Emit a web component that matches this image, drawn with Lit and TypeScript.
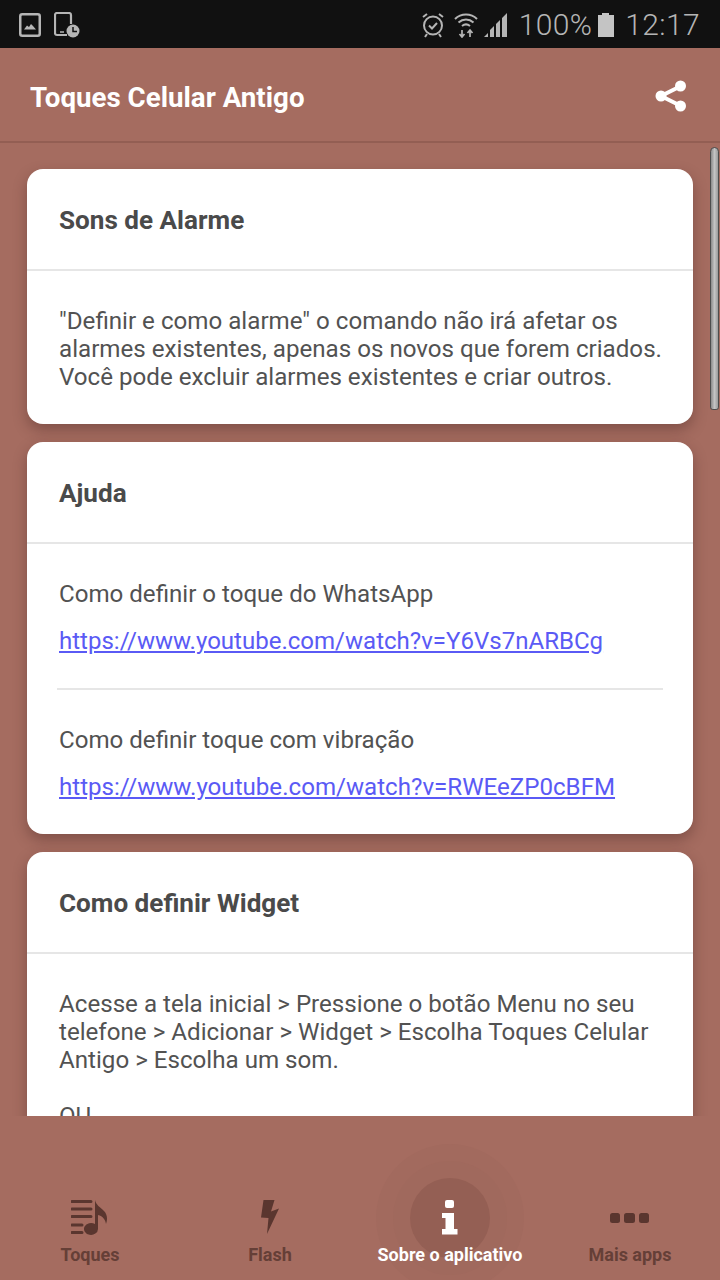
import { LitElement, html, css } from "lit";
import { customElement } from "lit/decorators.js";

@customElement("app-root")
export class AppRoot extends LitElement {
  static styles = css`
    :host { display: flex; flex-direction: column; width: 720px; height: 1280px; overflow: hidden; position: relative;
      background: #a56c60; font-family: Roboto, "Liberation Sans", sans-serif; color: #525252; }
    .status { height: 48px; flex: none; background: #111; display: flex; align-items: center; justify-content: space-between; padding: 2px 20px 0 19px; box-sizing: border-box; color: #b5b5b5; }
    .st-left, .st-right { display: flex; align-items: center; }
    .st-left { gap: 13px; }
    .st-right { font-size: 30px; font-weight: 300; line-height: 46px; }
    .header { height: 95px; flex: none; display: flex; align-items: center; justify-content: space-between; box-sizing: border-box; padding: 2px 33px 0 30px; border-bottom: 2px solid #935e53; }
    .title { color: #fff; font-size: 27.7px; font-weight: 700; margin-top: 4px; }
    .content { height: 973px; flex: none; overflow: hidden; padding: 26px 27px 0; box-sizing: border-box; display: flex; flex-direction: column; gap: 18px; }
    .card { flex: none; background: #fff; border-radius: 16px; box-shadow: 0 6px 14px rgba(60,30,25,.35); }
    .card h2 { margin: 0; display: flex; align-items: center; padding: 2px 32px 0; font-size: 26.1px; font-weight: 700; color: #4a4a4a; border-bottom: 2px solid #e6e6e6; box-sizing: content-box; height: 98px; }
    .body { padding: 36px 24px 33px 32px; font-size: 24.15px; line-height: 28px; }
    .body p { margin: 0; }
    .body .gap { margin-top: 28px; }
    .help { padding: 36px 32px 0; font-size: 24.1px; line-height: 28px; }
    .help p { margin: 0 0 19px; }
    .help a { color: #5a5af5; text-decoration: underline; display: block; font-size: 24.04px; }
    .help hr { margin: 33px -2px 36px; border: 0; border-top: 2px solid #e6e6e6; }
    .help .end { padding-bottom: 33px; font-size: 24.12px; }
    .nav { flex: 1; display: grid; grid-template-columns: repeat(4, 180px); position: relative; z-index: 1; background: #a56c60; }
    .tab { display: flex; flex-direction: column; align-items: center; justify-content: flex-end; padding-bottom: 14px; position: relative; color: #653f37; font-size: 18px; font-weight: 700; line-height: 22px; }
    .tab svg { display: block; margin-bottom: 8px; position: relative; }
    .tab.active { color: #fff; }
    .tab span { position: relative; white-space: nowrap; }
    .ring { position: absolute; left: 50%; top: 102px; border-radius: 50%; transform: translate(-50%, -50%); }
    .r1 { width: 148px; height: 148px; background: #a26a5e; }
    .r2 { width: 114px; height: 114px; background: #a0695d; }
    .r3 { width: 80px; height: 80px; background: #945f54; }
    .scroll { position: absolute; left: 710px; top: 147px; width: 9px; height: 263px; border-radius: 5px 5px 3px 3px; box-sizing: border-box; border: 1px solid #4d4d4d; background: linear-gradient(90deg, #8a8a8a, #c4c4c4 50%, #9a9a9a); }
  `;

  render() {
    return html`
      <div class="status">
        <div class="st-left">
          <svg width="22" height="24" viewBox="0 0 22 24" fill="none"><rect x="1.25" y="1.25" width="19.5" height="21.5" rx="2" stroke="#b5b5b5" stroke-width="2.500"/><path d="M5 16.500l3-4 2 1.500 2-3 2 2 3 3.500z" fill="#b5b5b5"/></svg>
          <svg width="26" height="26" viewBox="0 0 26 26" fill="none"><path d="M13 23H3a2 2 0 0 1-2-2V3a2 2 0 0 1 2-2h12a2 2 0 0 1 2 2v9" stroke="#b5b5b5" stroke-width="2.200"/><path d="M6 20h4" stroke="#b5b5b5" stroke-width="1.500"/><circle cx="19" cy="19" r="6.500" fill="#b5b5b5"/><path d="M19 15v4.500h4" stroke="#111" stroke-width="1.500"/></svg>
        </div>
        <div class="st-right">
          <svg width="24" height="26" viewBox="0 0 24 26" fill="none" stroke="#b5b5b5" stroke-width="2" style="margin-right:9px"><circle cx="12" cy="13.500" r="9"/><path d="M8 13.500l3 3 5-5.500M2 5l4-3M22 5l-4-3M6 22l-2 3M18 22l2 3"/></svg>
          <svg width="24" height="26" viewBox="0 0 24 26" fill="none" stroke="#b5b5b5" stroke-width="2" style="margin-right:6px"><path d="M1 7c6-6 16-6 22 0M4.500 10.500c4.500-4 10.500-4 15 0M8 14c2.500-2 5.500-2 8 0"/><path d="M12 16.500h.01" stroke-width="3"/><path d="M8 18v7M5.500 22l2.500 3 2.500-3M16 25v-7M13.500 21l2.500-3 2.500 3" stroke-width="1.700"/></svg>
          <svg width="24" height="24" viewBox="0 0 24 24" fill="#b5b5b5" style="margin-right:11px"><path d="M0 24l4-4v4zM6 24v-7l4-4v11zM12 24V11l4-4v17zM18 24V5l5-5v24z"/></svg>
          <span style="letter-spacing:.3px">100%</span>
          <svg width="16" height="24" viewBox="0 0 16 24" style="margin:0 11px 0 6px" fill="#c4c4c4"><path d="M4 2V0h7v2h5v22H0V2z"/></svg>
          <span style="letter-spacing:.4px">12:17</span>
        </div>
      </div>
      <div class="header">
        <div class="title">Toques Celular Antigo</div>
        <svg width="32" height="32" viewBox="0 0 32 32" fill="#fff" stroke="#fff"><path d="M26 6L6 16l20 10" fill="none" stroke-width="4"/><circle cx="25.500" cy="6" r="5.500" stroke="none"/><circle cx="25.500" cy="26" r="5.500" stroke="none"/><circle cx="6" cy="16" r="5.500" stroke="none"/></svg>
      </div>
      <div class="content">
        <div class="card">
          <h2>Sons de Alarme</h2>
          <div class="body"><p>"Definir e como alarme" o comando não irá afetar os alarmes existentes, apenas os novos que forem criados. Você pode excluir alarmes existentes e criar outros.</p></div>
        </div>
        <div class="card">
          <h2>Ajuda</h2>
          <div class="help">
            <p>Como definir o toque do WhatsApp</p>
            <a href="#">https://www.youtube.com/watch?v=Y6Vs7nARBCg</a>
            <hr />
            <p>Como definir toque com vibração</p>
            <a class="end" href="#">https://www.youtube.com/watch?v=RWEeZP0cBFM</a>
          </div>
        </div>
        <div class="card">
          <h2>Como definir Widget</h2>
          <div class="body"><p>Acesse a tela inicial &gt; Pressione o botão Menu no seu telefone &gt; Adicionar &gt; Widget &gt; Escolha Toques Celular Antigo &gt; Escolha um som.</p><p class="gap">OU</p></div>
        </div>
      </div>
      <div class="nav">
        <div class="tab">
          <svg width="38" height="36" viewBox="0 0 38 36" fill="#5a362f"><path d="M1 0h19a1.500 1.500 0 0 1 0 3H1a1.500 1.500 0 0 1 0-3zM1 7.500h19a1.500 1.500 0 0 1 0 3H1a1.500 1.500 0 0 1 0-3zM1 15h19a1.500 1.500 0 0 1 0 3H1a1.500 1.500 0 0 1 0-3zM1 23.500h10a1.500 1.500 0 0 1 0 3H1a1.500 1.500 0 0 1 0-3zM1 31h10a1.500 1.500 0 0 1 0 3H1a1.500 1.500 0 0 1 0-3z"/><path d="M24 0c1 5 5 7 9 11 3 3 4 8 2 13-.5-4-3-8-8-9v14a7 6 0 1 1-3-5z"/></svg>
          <span>Toques</span>
        </div>
        <div class="tab">
          <svg width="20" height="36" viewBox="0 0 20 36" fill="#5a362f"><path d="M3.500 0H14.500L11 11.500L19 8.500L7 34L8.500 18L1 17.500Z"/></svg>
          <span>Flash</span>
        </div>
        <div class="tab active">
          <div class="ring r1"></div><div class="ring r2"></div><div class="ring r3"></div>
          <svg width="16" height="36" viewBox="0 0 16 36" fill="#fff"><rect x="3" y="0" width="9" height="8" rx="2"/><path d="M0 13h12v16h3.500v5.500H0V29h3.500V18H0z"/></svg>
          <span>Sobre o aplicativo</span>
        </div>
        <div class="tab">
          <svg width="40" height="36" viewBox="0 0 40 36" fill="#5a362f"><rect x="0" y="13" width="10" height="10" rx="2.500"/><rect x="14" y="13" width="11" height="10" rx="2.500"/><rect x="29" y="13" width="10" height="10" rx="2.500"/></svg>
          <span>Mais apps</span>
        </div>
      </div>
      <div class="scroll"></div>
    `;
  }
}
